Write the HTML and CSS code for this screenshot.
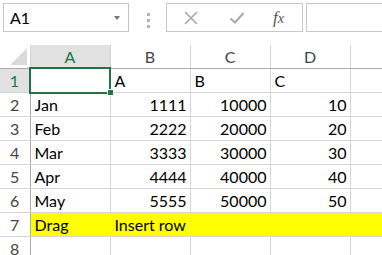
FILE: index.html
```html
<!DOCTYPE html>
<html lang="en">
<head>
    <meta charset="UTF-8">
    <title>Sheet</title>
    <link rel="stylesheet" href="styles.css">
</head>
<body>
    <div class="toolbar">
        <div class="name-box">
            <span>A1</span>
            <span class="arrow"></span>
        </div>
        <div class="dots"><i></i><i></i><i></i></div>
        <div class="fx-buttons">
            <svg class="btn-x" width="16" height="16" viewBox="0 0 16 16">
                <path d="M2 2 L14 14 M14 2 L2 14" stroke="#a8a8a8" stroke-width="1.6" fill="none"/>
            </svg>
            <svg class="btn-ok" width="16" height="14" viewBox="0 0 16 14">
                <path d="M1.5 7.5 L6 11.5 L14.5 2" stroke="#a8a8a8" stroke-width="2" fill="none"/>
            </svg>
            <span class="fx">f<span class="fx-x">x</span></span>
        </div>
        <div class="formula"></div>
    </div>

    <table class="sheet">
        <colgroup>
            <col class="c-head">
            <col class="c-cell"><col class="c-cell"><col class="c-cell"><col class="c-cell"><col class="c-last">
        </colgroup>
        <thead>
            <tr>
                <th class="corner"><span class="tri"></span></th>
                <th class="sel">A</th>
                <th>B</th>
                <th>C</th>
                <th>D</th>
                <th></th>
            </tr>
        </thead>
        <tbody>
            <tr>
                <th class="sel">1</th>
                <td class="active"><span class="handle"></span></td>
                <td>A</td><td>B</td><td>C</td><td></td>
            </tr>
            <tr>
                <th>2</th><td>Jan</td><td class="num">1111</td><td class="num">10000</td><td class="num">10</td><td></td>
            </tr>
            <tr>
                <th>3</th><td>Feb</td><td class="num">2222</td><td class="num">20000</td><td class="num">20</td><td></td>
            </tr>
            <tr>
                <th>4</th><td>Mar</td><td class="num">3333</td><td class="num">30000</td><td class="num">30</td><td></td>
            </tr>
            <tr>
                <th>5</th><td>Apr</td><td class="num">4444</td><td class="num">40000</td><td class="num">40</td><td></td>
            </tr>
            <tr>
                <th>6</th><td>May</td><td class="num">5555</td><td class="num">50000</td><td class="num">50</td><td></td>
            </tr>
            <tr class="yellow">
                <th>7</th><td>Drag</td><td>Insert row</td><td></td><td></td><td></td>
            </tr>
            <tr>
                <th>8</th><td></td><td></td><td></td><td></td><td></td>
            </tr>
        </tbody>
    </table>
</body>
</html>
```

FILE: styles.css
```css
body {
    margin: 0;
    width: 382px;
    height: 255px;
    overflow: hidden;
    background: #fff;
    font-family: Lato, "Liberation Sans", sans-serif;
    font-size: 16px;
    color: #000;
}
.toolbar {
    display: flex;
    align-items: flex-start;
    padding: 3px 0 0 3px;
    height: 45px;
    box-sizing: border-box;
}
.name-box {
    width: 126px;
    height: 29px;
    box-sizing: border-box;
    border: 1px solid #c6c6c6;
    display: flex;
    align-items: center;
    justify-content: space-between;
    padding: 0 8px 0 6px;
    font-size: 16px;
}
.arrow {
    width: 0;
    height: 0;
    border-left: 3.5px solid transparent;
    border-right: 3.5px solid transparent;
    border-top: 4px solid #777;
}
.dots {
    width: 3px;
    margin: 10px 16px 0 18px;
    display: flex;
    flex-direction: column;
    gap: 3px;
}
.dots i {
    display: block;
    width: 3px;
    height: 3px;
    background: #b5b5b5;
}
.fx-buttons {
    width: 137px;
    height: 29px;
    box-sizing: border-box;
    border: 1px solid #c6c6c6;
    display: flex;
    align-items: center;
    padding-left: 16px;
}
.btn-x { margin-right: 30px; }
.btn-ok { margin-right: 28px; margin-top: 1px; }
.fx {
    font-family: "Liberation Serif", serif;
    font-style: italic;
    font-size: 17px;
    color: #555;
}
.fx-x { font-size: 14px; }
.formula {
    flex: 1;
    height: 29px;
    margin-left: 3px;
    box-sizing: border-box;
    border: 1px solid #c6c6c6;
    border-right: none;
}

.sheet {
    border-collapse: collapse;
    table-layout: fixed;
    width: 382px;
}
.c-head { width: 30px; }
.c-cell { width: 80px; }
.c-last { width: 32px; }
.sheet th,
.sheet td {
    border: 1px solid #d4d4d4;
    padding: 0 3px 0 4px;
    height: 23px;
    white-space: nowrap;
    overflow: visible;
    text-align: left;
    font-weight: normal;
}
.sheet tr:first-child th {
    border-top: none;
}
.sheet th:first-child,
.sheet td:first-child {
    border-left: none;
}
.sheet tr th:last-child,
.sheet tr td:last-child {
    border-right: none;
}
.sheet thead th {
    height: 22px;
    text-align: center;
    color: #444;
    border-bottom-color: #ababab;
    padding: 0;
}
.sheet tbody th {
    text-align: center;
    color: #444;
    padding: 0;
    border-right-color: #ababab;
}
.sheet th.sel {
    background: #e1e1e1;
    color: #217346;
}
.sheet thead th.sel {
    border-bottom: 2px solid #217346;
}
.sheet tbody th.sel {
    border-right: 2px solid #217346;
}
.corner {
    position: relative;
}
.tri {
    position: absolute;
    right: 3px;
    bottom: 3px;
    width: 0;
    height: 0;
    border-left: 17px solid transparent;
    border-bottom: 17px solid #dadada;
}
.num {
    text-align: right !important;
}
.active {
    position: relative;
    outline: 2px solid #217346;
    outline-offset: -1px;
}
.handle {
    position: absolute;
    right: -4px;
    bottom: -4px;
    width: 5px;
    height: 5px;
    background: #217346;
    border: 1px solid #fff;
}
.yellow td {
    background: #ffff00;
    border-color: #ffff00;
    border-bottom-color: #d4d4d4;
}
```
